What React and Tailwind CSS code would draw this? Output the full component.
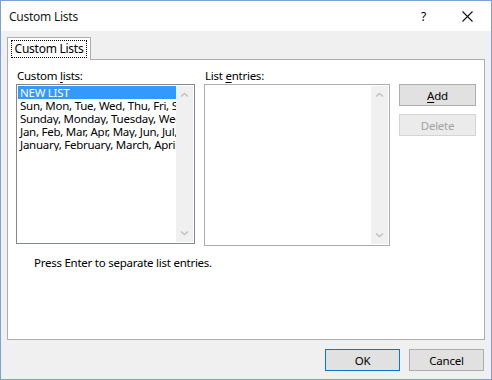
import React from 'react';

const lists = [
  'NEW LIST',
  'Sun, Mon, Tue, Wed, Thu, Fri, Sat',
  'Sunday, Monday, Tuesday, Wednesday, Thursday, Friday, Saturday',
  'Jan, Feb, Mar, Apr, May, Jun, Jul, Aug, Sep, Oct, Nov, Dec',
  'January, February, March, April, May, June, July, August',
];

function Chevron({ down }) {
  return (
    <svg width="9" height="6" viewBox="0 0 9 6" className="block">
      <path
        d={down ? 'M1 1.5 L4.5 4.5 L8 1.5' : 'M1 4.5 L4.5 1.5 L8 4.5'}
        fill="none"
        stroke="#c2c2c2"
        strokeWidth="1.6"
      />
    </svg>
  );
}

function ScrollBar() {
  return (
    <div className="w-[17px] h-full bg-[#f0f0f0] flex flex-col items-center justify-between py-[6px] shrink-0">
      <Chevron />
      <Chevron down />
    </div>
  );
}

function Button({ children, primary, disabled, className = '' }) {
  return (
    <div
      className={
        'h-[22px] flex items-center justify-center border ' +
        (primary
          ? 'border-[#0078d7] bg-[#e1e1e1] text-black '
          : disabled
          ? 'border-[#d4d4d4] bg-[#ebebeb] text-[#a3a3a3] '
          : 'border-[#adadad] bg-[#e1e1e1] text-black ') +
        className
      }
    >
      {children}
    </div>
  );
}

export default function App() {
  return (
    <div className="w-[492px] h-[380px] border border-[#7ba1d6] flex flex-col font-['Noto_Sans',sans-serif] text-[11.5px] tracking-[-0.25px] leading-[13px] text-black overflow-hidden">
      {/* title bar */}
      <div className="h-[30px] bg-white flex items-center pl-[8px] shrink-0">
        <span className="text-[12px] text-[#1b1b1b]">Custom Lists</span>
        <span className="ml-auto mr-[36px] text-[12px]">?</span>
        <svg width="11" height="11" viewBox="0 0 11 11" className="mr-[18px]">
          <path d="M0.5 0.5 L10.5 10.5 M10.5 0.5 L0.5 10.5" stroke="#111" strokeWidth="1.1" />
        </svg>
      </div>

      {/* body */}
      <div className="flex-1 bg-[#f0f0f0] pt-[6px] px-[6px] flex flex-col">
        <div className="relative z-10 -mb-px w-[84px] h-[23px] bg-white border border-b-0 border-[#adadad] flex items-center justify-center">
          <span className="outline outline-1 outline-dotted outline-black px-[3px] py-[1px] leading-[14px] text-[12px]">Custom Lists</span>
        </div>

        <div className="h-[281px] bg-white border border-[#adadad] pl-[8px] pt-[9px] flex flex-col">
          <div className="flex">
            <div className="flex flex-col w-[179px]">
              <div className="h-[15px] pl-[1px]">
                Custom <span className="underline underline-offset-2">l</span>ists:
              </div>
              <div className="h-[160px] border border-[#828790] p-[1px] flex">
                <div className="flex-1 overflow-hidden">
                  {lists.map((l, i) => (
                    <div
                      key={i}
                      className={
                        'h-[13px] pl-[2px] whitespace-nowrap overflow-hidden ' +
                        (i === 0 ? 'bg-[#3399ff] text-white' : '')
                      }
                    >
                      {l}
                    </div>
                  ))}
                </div>
                <ScrollBar />
              </div>
            </div>

            <div className="flex flex-col w-[186px] ml-[9px]">
              <div className="h-[15px] pl-[1px]">
                List <span className="underline underline-offset-2">e</span>ntries:
              </div>
              <div className="h-[162px] border border-[#adadad] p-[1px] flex">
                <div className="flex-1" />
                <ScrollBar />
              </div>
            </div>

            <div className="flex flex-col w-[77px] ml-[9px] pt-[15px] gap-[8px]">
              <Button>
                <span><span className="underline underline-offset-2">A</span>dd</span>
              </Button>
              <Button disabled>Delete</Button>
            </div>
          </div>

          <div className="mt-[10px] pl-[18px]">Press Enter to separate list entries.</div>
        </div>

        <div className="flex justify-end gap-[9px] pt-[9px] pr-[1px]">
          <Button primary className="w-[75px]">OK</Button>
          <Button className="w-[75px]">Cancel</Button>
        </div>
      </div>
    </div>
  );
}
